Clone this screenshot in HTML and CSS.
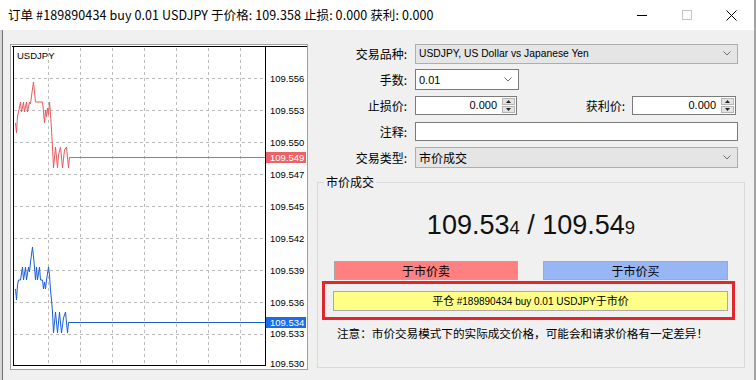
FILE: index.html
```html
<!DOCTYPE html>
<html lang="zh-CN">
<head>
<meta charset="utf-8">
<title>订单</title>
<link rel="stylesheet" href="styles.css">
</head>
<body>
<div class="window">
  <div class="titlebar">
    <div class="title">订单 #189890434 buy 0.01 USDJPY 于价格: 109.358 止损: 0.000 获利: 0.000</div>
    <div class="controls">
      <span class="ctl"><svg width="10" height="10" viewBox="0 0 10 10"><line x1="0" y1="5.5" x2="10" y2="5.5" stroke="#000" stroke-width="1"/></svg></span>
      <span class="ctl"><svg width="10" height="10" viewBox="0 0 10 10"><rect x="0.5" y="0.5" width="9" height="9" fill="none" stroke="#c4c4c4" stroke-width="1"/></svg></span>
      <span class="ctl"><svg width="11" height="11" viewBox="0 0 11 11"><path d="M0.5 0.5 L10.5 10.5 M10.5 0.5 L0.5 10.5" stroke="#000" stroke-width="1" fill="none"/></svg></span>
    </div>
  </div>
  <div class="body">
    <div class="chart-panel">
      <svg class="chart" width="296" height="324" viewBox="11 45 296 324">
        <rect x="11" y="45" width="296" height="324" fill="#fff"/>
        <g stroke="#bcbcbc" stroke-width="1" stroke-dasharray="3 3" shape-rendering="crispEdges">
          <line x1="48.5" y1="48" x2="48.5" y2="365"/>
          <line x1="80.5" y1="48" x2="80.5" y2="365"/>
          <line x1="112.5" y1="48" x2="112.5" y2="365"/>
          <line x1="144.5" y1="48" x2="144.5" y2="365"/>
          <line x1="176.5" y1="48" x2="176.5" y2="365"/>
          <line x1="208.5" y1="48" x2="208.5" y2="365"/>
          <line x1="240.5" y1="48" x2="240.5" y2="365"/>
          <line x1="14" y1="78.5" x2="265" y2="78.5"/>
          <line x1="14" y1="110.5" x2="265" y2="110.5"/>
          <line x1="14" y1="142.5" x2="265" y2="142.5"/>
          <line x1="14" y1="174.5" x2="265" y2="174.5"/>
          <line x1="14" y1="206.5" x2="265" y2="206.5"/>
          <line x1="14" y1="238.5" x2="265" y2="238.5"/>
          <line x1="14" y1="270.5" x2="265" y2="270.5"/>
          <line x1="14" y1="302.5" x2="265" y2="302.5"/>
          <line x1="14" y1="334.5" x2="265" y2="334.5"/>
        </g>
        <g stroke="#000" stroke-width="1" shape-rendering="crispEdges" fill="none">
          <line x1="12" y1="46.5" x2="307" y2="46.5"/>
          <line x1="13.5" y1="46" x2="13.5" y2="366"/>
          <line x1="13" y1="365.5" x2="266" y2="365.5"/>
          <line x1="265.5" y1="46" x2="265.5" y2="366"/>
        </g>
        <polyline fill="none" stroke="#e45b5e" stroke-width="1" points="15.5,123 16.5,133 17.5,116 18.5,112 20.5,102 21.5,112 23.5,102 24.5,112 26.5,102 27.5,112 29.5,102 30.5,104 31.5,96 33.5,82 35.5,102 42.5,102 43.5,112 44.5,123 45.5,110 46.5,117 47.5,108 48.5,115 49.5,102 50.5,114 51.5,130 52.5,147 53.5,168 55.5,147 57.5,168 58.5,155 60.5,147 62.5,168 64.5,150 66.5,147 68.5,168 69.5,157.5 265,157.5"/>
        <polyline fill="none" stroke="#1b5fd3" stroke-width="1" points="15.5,289 16.5,300 17.5,285 18.5,280 20.5,280 22.5,267 23.5,280 25.5,267 26.5,280 28.5,267 29.5,272 30.5,262 32.5,247 34.5,267 35.5,280 36.5,267 37.5,280 39.5,267 40.5,280 42.5,280 43.5,289 44.5,282 45.5,289 46.5,280 48.5,267 49.5,275 50.5,290 51.5,300 52.5,312 53.5,333 55.5,312 57.5,333 59.5,312 61.5,333 63.5,318 65.5,312 67.5,333 68.5,322.5 265,322.5"/>
        <text class="sym" x="17" y="58.5">USDJPY</text>
        <g class="ax">
          <text x="270" y="81.5">109.556</text>
          <text x="270" y="113.5">109.553</text>
          <text x="270" y="145.5">109.550</text>
          <text x="270" y="177.5">109.547</text>
          <text x="270" y="209.5">109.545</text>
          <text x="270" y="241.5">109.542</text>
          <text x="270" y="273.5">109.539</text>
          <text x="270" y="305.5">109.536</text>
          <text x="270" y="337">109.533</text>
          <text x="270" y="366.5">109.530</text>
        </g>
        <rect x="266" y="152" width="40" height="11" fill="#ee6266"/>
        <text class="ax tag" x="270" y="161">109.549</text>
        <rect x="266" y="317" width="40" height="11" fill="#1b6ce8"/>
        <text class="ax tag" x="270" y="326">109.534</text>
      </svg>
    </div>
    <div class="side">
      <div class="form">
        <div class="row">
          <span class="lbl">交易品种:</span>
          <div class="select full h20"><span class="val latin txt">USDJPY, US Dollar vs Japanese Yen</span><svg class="chev" width="8" height="5" viewBox="0 0 8 5"><polyline points="0.5,0.5 4,4 7.5,0.5" fill="none" stroke="#6d6d6d" stroke-width="1"/></svg></div>
        </div>
        <div class="row">
          <span class="lbl">手数:</span>
          <div class="select white lots"><span class="val latin">0.01</span><svg class="chev" width="8" height="5" viewBox="0 0 8 5"><polyline points="0.5,0.5 4,4 7.5,0.5" fill="none" stroke="#6d6d6d" stroke-width="1"/></svg></div>
        </div>
        <div class="row">
          <span class="lbl">止损价:</span>
          <div class="spin sl"><span class="val latin">0.000</span><span class="spinbtns"><span class="sb"><svg width="5" height="3" viewBox="0 0 5 3"><polygon points="2.5,0 5,3 0,3" fill="#222"/></svg></span><span class="sb"><svg width="5" height="3" viewBox="0 0 5 3"><polygon points="0,0 5,0 2.5,3" fill="#222"/></svg></span></span></div>
          <span class="lbl2">获利价:</span>
          <div class="spin tp"><span class="val latin">0.000</span><span class="spinbtns"><span class="sb"><svg width="5" height="3" viewBox="0 0 5 3"><polygon points="2.5,0 5,3 0,3" fill="#222"/></svg></span><span class="sb"><svg width="5" height="3" viewBox="0 0 5 3"><polygon points="0,0 5,0 2.5,3" fill="#222"/></svg></span></span></div>
        </div>
        <div class="row">
          <span class="lbl">注释:</span>
          <div class="input full"></div>
        </div>
        <div class="row">
          <span class="lbl">交易类型:</span>
          <div class="select full"><span class="val cjk">市价成交</span><svg class="chev" width="8" height="5" viewBox="0 0 8 5"><polyline points="0.5,0.5 4,4 7.5,0.5" fill="none" stroke="#6d6d6d" stroke-width="1"/></svg></div>
        </div>
      </div>
      <fieldset class="group">
        <legend>市价成交</legend>
        <div class="price">109.53<small>4</small> / 109.54<small>9</small></div>
        <div class="btns">
          <div class="btn sell">于市价卖</div>
          <div class="btn buy">于市价买</div>
        </div>
        <div class="frame">
          <div class="closebtn"><span class="cjk11">平仓</span>&nbsp;<span class="latin10">#189890434 buy 0.01 USDJPY</span><span class="cjk11">于市价</span></div>
        </div>
        <div class="note">注意：市价交易模式下的实际成交价格，可能会和请求价格有一定差异！</div>
      </fieldset>
    </div>
  </div>
</div>
</body>
</html>
```
FILE: styles.css
```css
* { box-sizing: border-box; }
html, body { margin: 0; padding: 0; }
body {
  width: 756px;
  height: 380px;
  overflow: hidden;
  background: #f0f0f0;
  font-family: "Noto Sans CJK SC", sans-serif;
  color: #000;
}
.window {
  width: 756px;
  height: 380px;
  display: flex;
  flex-direction: column;
  border-right: 2px solid #a3a3a3;
}
.titlebar {
  height: 30px;
  flex: none;
  background: #fff;
  display: flex;
  align-items: center;
}
.title {
  flex: 1;
  padding-left: 8px;
  font-size: 12.5px;
  letter-spacing: 0.1px;
  line-height: 16px;
  white-space: nowrap;
}
.controls { display: flex; height: 30px; }
.ctl {
  width: 45px;
  height: 30px;
  display: flex;
  align-items: center;
  justify-content: center;
}
.body {
  flex: 1;
  display: flex;
  border-left: 2px solid #d6d6d6;
  box-shadow: inset 1px 0 0 #6f6f6f;
}
.chart-panel {
  flex: none;
  margin: 14px 0 0 8px;
  width: 298px;
  height: 326px;
  border: 1px solid #a0a0a0;
  background: #fff;
}
.chart { display: block; }
.chart .sym { font: 9.5px "Liberation Sans", sans-serif; fill: #000; }
.chart .ax text, .chart text.ax { font: 9.5px "Liberation Sans", sans-serif; fill: #000; }
.chart text.tag { fill: #fff; }

.side {
  flex: 1;
  display: flex;
  flex-direction: column;
}
.form {
  display: flex;
  flex-direction: column;
  gap: 5px;
  padding: 13px 16px 0 0;
}
.row {
  display: flex;
  align-items: center;
  height: 21px;
}
.lbl {
  flex: none;
  width: 99px;
  margin-right: 8px;
  text-align: right;
  font-size: 12px;
  line-height: 16px;
}
.latin { font-family: "Liberation Sans", sans-serif; font-size: 11px; }
.latin.txt { font-size: 10.3px; }
.latin10 { font-family: "Liberation Sans", sans-serif; font-size: 10px; }
.cjk { font-family: "Noto Sans CJK SC", sans-serif; font-size: 12px; }
.cjk11 { font-family: "Noto Sans CJK SC", sans-serif; font-size: 11px; }
.select {
  height: 21px;
  border: 1px solid #adadad;
  background: #e5e5e5;
  display: flex;
  align-items: center;
  padding: 0 6px 0 3px;
  line-height: 16px;
}
.select.h20 { height: 20px; }
.select .val { flex: 1; white-space: nowrap; }
.select.white { background: #fff; border-color: #7a7a7a; }
.full { width: 323px; }
.lots { width: 104px; }
.spin {
  height: 19px;
  display: flex;
  border: 1px solid #7a7a7a;
  background: #fff;
}
.spin .val {
  flex: 1;
  text-align: right;
  padding-right: 5px;
  line-height: 17px;
}
.sl { width: 102px; }
.tp { width: 104px; margin-right: 2px; }
.spinbtns {
  width: 13px;
  margin: 1px 1px 1px 0;
  display: flex;
  flex-direction: column;
  gap: 1px;
}
.sb {
  flex: 1;
  background: #e3e3e3;
  border: 1px solid #b5b5b5;
  display: flex;
  align-items: center;
  justify-content: center;
}
.sb svg { display: block; }
.lbl2 {
  flex: 1;
  text-align: right;
  padding-right: 7px;
  font-size: 12px;
  line-height: 16px;
}
.input {
  height: 19px;
  border: 1px solid #7a7a7a;
  background: #fff;
}

.group {
  flex: 1;
  min-width: 0;
  margin: 6px 9px 12px 9px;
  padding: 0;
  border: 1px solid #d9d9d9;
  display: flex;
  flex-direction: column;
}
.group legend {
  margin-left: 6px;
  padding: 0 2px;
  font-size: 12px;
  line-height: 16px;
}
.price {
  margin-top: 15px;
  text-align: center;
  font: 27px/40px "Liberation Sans", sans-serif;
  color: #111;
}
.price small { font-size: 18.5px; }
.btns {
  margin-top: 13px;
  padding: 0 16px;
  display: flex;
  justify-content: space-between;
}
.btn {
  height: 19px;
  border: 1px solid #a9a9a9;
  display: flex;
  align-items: center;
  justify-content: center;
  font-size: 12px;
  line-height: 16px;
}
.sell { width: 184px; background: #ff8080; }
.buy { width: 185px; background: #98b5f5; }
.frame {
  margin: 1px 9px 0 4px;
  border: 3px solid #e3262c;
  padding: 7px 4px 6px 8px;
}
.closebtn {
  height: 20px;
  border: 1px solid #a9a9a9;
  background: #ffff88;
  text-align: center;
  line-height: 17px;
  font-size: 11px;
  white-space: nowrap;
}
.closebtn span { line-height: 17px; vertical-align: baseline; }
.note {
  margin-top: 5px;
  padding-left: 19px;
  font-size: 11.6px;
  line-height: 16px;
  white-space: nowrap;
}
```
